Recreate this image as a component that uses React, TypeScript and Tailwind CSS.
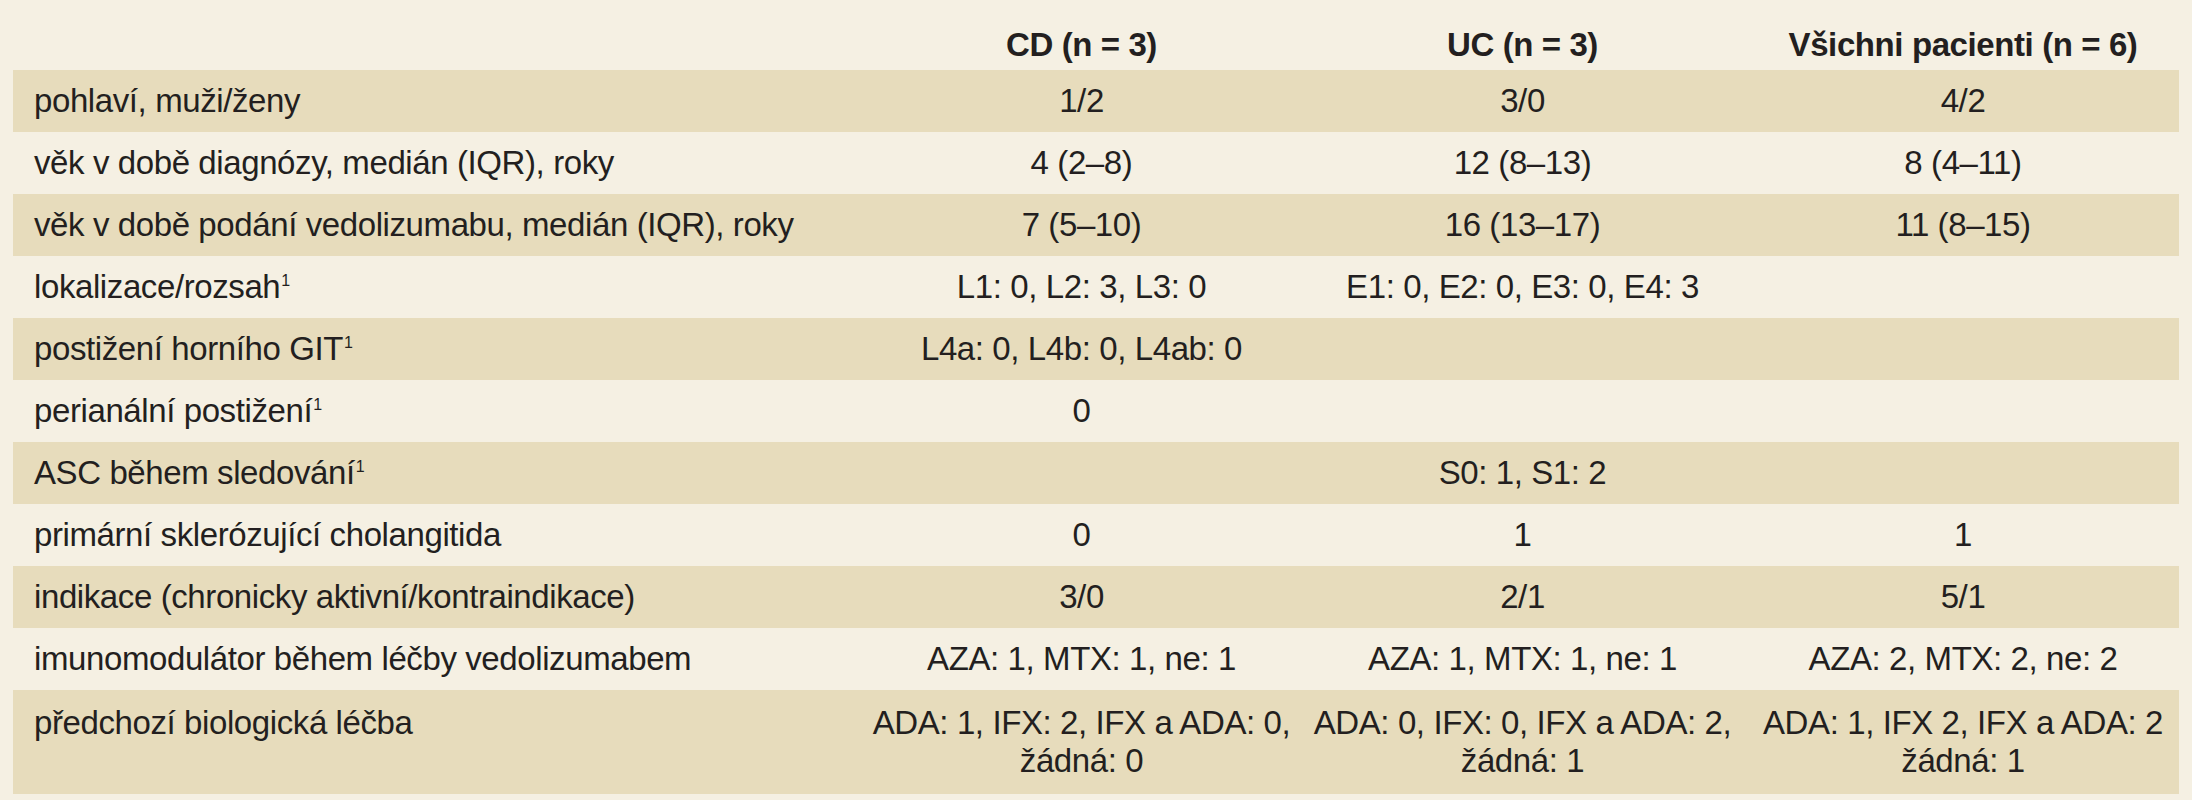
import React from "react"

type Row = {
  label: React.ReactNode
  cd: React.ReactNode
  uc: React.ReactNode
  all: React.ReactNode
}

const Sup = () => <span className="relative top-[5px] ml-[1px] align-top text-[16px] leading-none">1</span>

const rows: Row[] = [
  { label: "pohlaví, muži/ženy", cd: "1/2", uc: "3/0", all: "4/2" },
  { label: "věk v době diagnózy, medián (IQR), roky", cd: "4 (2–8)", uc: "12 (8–13)", all: "8 (4–11)" },
  { label: "věk v době podání vedolizumabu, medián (IQR), roky", cd: "7 (5–10)", uc: "16 (13–17)", all: "11 (8–15)" },
  {
    label: (
      <>
        lokalizace/rozsah
        <Sup />
      </>
    ),
    cd: "L1: 0, L2: 3, L3: 0",
    uc: "E1: 0, E2: 0, E3: 0, E4: 3",
    all: "",
  },
  {
    label: (
      <>
        postižení horního GIT
        <Sup />
      </>
    ),
    cd: "L4a: 0, L4b: 0, L4ab: 0",
    uc: "",
    all: "",
  },
  {
    label: (
      <>
        perianální postižení
        <Sup />
      </>
    ),
    cd: "0",
    uc: "",
    all: "",
  },
  {
    label: (
      <>
        ASC během sledování
        <Sup />
      </>
    ),
    cd: "",
    uc: "S0: 1, S1: 2",
    all: "",
  },
  { label: "primární sklerózující cholangitida", cd: "0", uc: "1", all: "1" },
  { label: "indikace (chronicky aktivní/kontraindikace)", cd: "3/0", uc: "2/1", all: "5/1" },
  {
    label: "imunomodulátor během léčby vedolizumabem",
    cd: "AZA: 1, MTX: 1, ne: 1",
    uc: "AZA: 1, MTX: 1, ne: 1",
    all: "AZA: 2, MTX: 2, ne: 2",
  },
  {
    label: "předchozí biologická léčba",
    cd: (
      <>
        ADA: 1, IFX: 2, IFX a ADA: 0,
        <br />
        žádná: 0
      </>
    ),
    uc: (
      <>
        ADA: 0, IFX: 0, IFX a ADA: 2,
        <br />
        žádná: 1
      </>
    ),
    all: (
      <>
        ADA: 1, IFX 2, IFX a ADA: 2
        <br />
        žádná: 1
      </>
    ),
  },
]

export default function App() {
  return (
    <div className="w-[2192px] h-[800px] overflow-hidden bg-[#f5f0e3] px-[13px] font-['Liberation_Sans',Arial,sans-serif] text-[33px] leading-[38px] tracking-[-0.4px] text-[#231f20]">
      <div className="grid grid-cols-[848px_441px_441px_440px] font-bold">
        <div className="pt-[26px] pb-[6px]" />
        <div className="pt-[26px] pb-[6px] text-center whitespace-nowrap">CD (n = 3)</div>
        <div className="pt-[26px] pb-[6px] text-center whitespace-nowrap">UC (n = 3)</div>
        <div className="pt-[26px] pb-[6px] text-center whitespace-nowrap">Všichni pacienti (n = 6)</div>
      </div>
      {rows.map((r, i) => {
        const last = i === rows.length - 1
        const pad = last ? "pt-[14px] pb-[14px]" : "py-3"
        return (
          <div
            key={i}
            className={`grid grid-cols-[848px_441px_441px_440px] ${i % 2 === 0 ? "bg-[#e7dcbc]" : "bg-[#f5f0e3]"}`}
          >
            <div className={`${pad} pl-[21px] whitespace-nowrap`}>{r.label}</div>
            <div className={`${pad} text-center whitespace-nowrap`}>{r.cd}</div>
            <div className={`${pad} text-center whitespace-nowrap`}>{r.uc}</div>
            <div className={`${pad} text-center whitespace-nowrap`}>{r.all}</div>
          </div>
        )
      })}
    </div>
  )
}
